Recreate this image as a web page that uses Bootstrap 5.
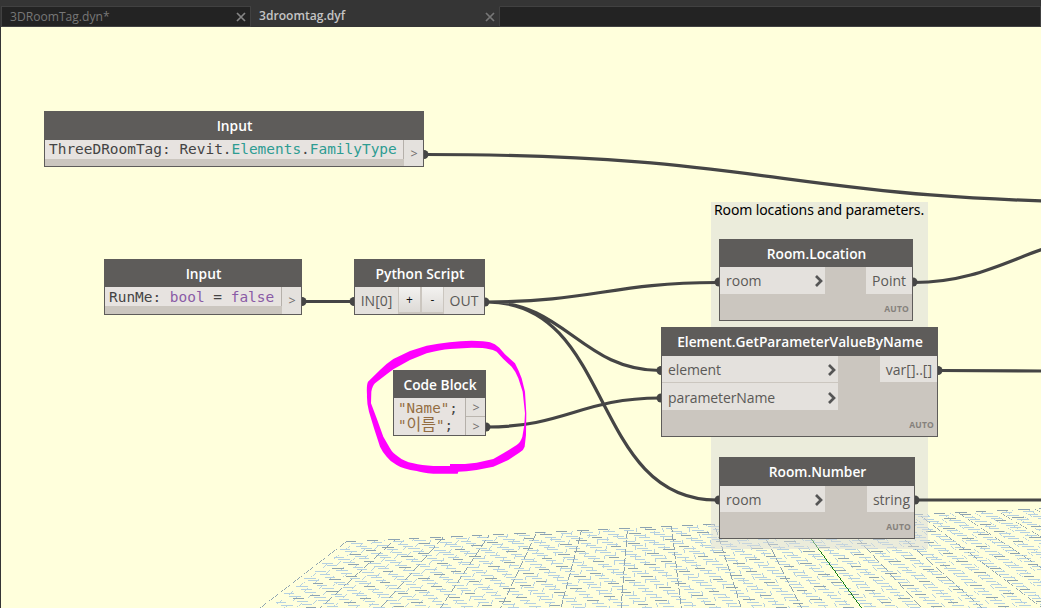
<!DOCTYPE html>
<html lang="en">
<head>
<meta charset="utf-8">
<title>3droomtag.dyf</title>
<link href="https://cdn.jsdelivr.net/npm/bootstrap@5.3.0/dist/css/bootstrap.min.css" rel="stylesheet">
<style>
body{width:1041px;height:608px;overflow:hidden;background:#ffffdc;font-family:"Open Sans",sans-serif;font-size:14px;line-height:1;color:#5b5957}
.tabstrip{height:27px;padding:6px 0 0 1px;background:#353535}
.doc-tab{width:250px;height:21px;padding:0 4px 0 8px;border:1px solid #414141;background:#232323;color:#777;font-size:12.1px}
.doc-tab:not(.current) span{padding-top:2px}
.doc-tab.current{width:249px;background:#353535;border-color:#353535 #414141 #353535 #353535;color:#c4c4c4;font-weight:600;padding-left:7px}
.tab-rest{background:#232323;border:1px solid #414141;border-left:0}
.workspace{height:581px;border-left:1px solid #353535}
.layer{left:0;top:0;width:1041px;height:608px;pointer-events:none}
.group{left:711px;top:202px;width:217px;height:347px;background:rgba(215,217,218,.5);color:#000;font-family:"Noto Sans",sans-serif;font-size:14px;letter-spacing:-.13px;padding:0 0 0 3px;line-height:15px}
.node{border:1px solid #5e5c5a;background:#cbc6bf}
.title{background:#5e5c5a;color:#fff;font-weight:600;font-size:13.75px;flex:none;height:27px;padding:1px 0 0 1px}
.title.tall{height:28px;padding-bottom:1px}
.port{background:#e4e1dd;height:27px;padding-top:1px}
.in{width:105px;padding:1px 2px 0 6px}
.out{padding:1px 3px 0 6px}
.auto{font-size:8.5px;font-weight:700;color:#85817c;letter-spacing:.2px;padding:0 3px 7px 0}
.code{font-family:"DejaVu Sans Mono","Noto Sans CJK KR",monospace;font-size:14.45px;color:#444;background:#e7e3e0;height:19px;padding-left:4px;line-height:18px;white-space:pre;border-right:1px solid #b5b0aa}
.n2 .code{line-height:20px}
.arrow{width:19px;background:#e4e1dd;font-size:12.5px;color:#6e6c6a;padding:2px 0 0 1px}
.teal{color:#2e9c92}.violet{color:#8a5ba6}.brown{color:#936d42}
.hangul{font-size:16px;line-height:1}
.step-btn{width:21px;height:25px;background:linear-gradient(#f3f2f0,#dddad6);color:#111;font-size:12px}
.n1{left:44px;top:111px;width:380px;height:56px}
.n2{left:104px;top:259px;width:198px;height:56px}
.n3{left:354px;top:259px;width:131px;height:56px}
.n4{left:393px;top:370px;width:93px;height:66px}
.n5{left:719px;top:239px;width:194px;height:82px}
.n6{left:661px;top:327px;width:277px;height:110px}
.n7{left:719px;top:457px;width:196px;height:82px}
.n6 .in{width:176px;padding-left:6px}
.n6 .port{padding-top:2px}
.n6 .in{letter-spacing:-.1px}
.n4 .code{height:auto;font-size:14.2px;line-height:17px;padding-top:2px}
.n4 .arrow+.arrow{border-top:1px solid #bbb6af}
</style>
<script src="https://cdn.jsdelivr.net/npm/bootstrap@5.3.0/dist/js/bootstrap.bundle.min.js"></script>
</head>
<body>
<nav class="tabstrip d-flex">
  <div class="doc-tab d-flex align-items-center justify-content-between"><span>3DRoomTag.dyn*</span><svg width="10" height="10" viewBox="0 0 10 10"><path d="M1 1l8 8M9 1L1 9" stroke="#858585" stroke-width="1.7"/></svg></div>
  <div class="doc-tab current d-flex align-items-center justify-content-between"><span>3droomtag.dyf</span><svg width="10" height="10" viewBox="0 0 10 10"><path d="M1 1l8 8M9 1L1 9" stroke="#777" stroke-width="1.7"/></svg></div>
  <div class="tab-rest flex-grow-1"></div>
</nav>
<main class="workspace"></main>

<svg class="layer position-absolute" id="grid" shape-rendering="crispEdges" fill="none"></svg>
<section class="group position-absolute text-nowrap">Room locations and parameters.</section>

<svg class="layer position-absolute" fill="none" stroke="#454545" stroke-width="3.2">
  <path d="M425 154.5C787 154.5 780 202.500 1150 202.500M303 301.5H354M487 302C591 302 613 282.500 717 282.500M487 302C565 302 582 370.500 660 370.500M487 302C615 302 589 500 717 500M487 427C565 427 582 398 660 398M914 282.500C970 282.500 1005 262 1043 249M939 370.500L1041 371M916 500H1041"/>
  <g fill="#454545" stroke="none">
    <circle cx="424" cy="154.500" r="4.500"/><circle cx="302" cy="301.500" r="4.500"/><circle cx="354" cy="301.500" r="4.500"/><circle cx="485" cy="302" r="4.500"/><circle cx="486" cy="427" r="4.500"/>
    <circle cx="719" cy="282" r="4.500"/><circle cx="661" cy="370.500" r="4.500"/><circle cx="661" cy="398" r="4.500"/><circle cx="719" cy="500" r="4.500"/><circle cx="913" cy="282" r="4.500"/><circle cx="938" cy="370.500" r="4.500"/><circle cx="915" cy="500" r="4.500"/>
  </g>
</svg>

<article class="node n1 position-absolute d-flex flex-column">
  <div class="title tall d-flex align-items-center justify-content-center">Input</div>
  <div class="d-flex flex-grow-1"><div class="code flex-grow-1">ThreeDRoomTag: Revit.<span class="teal">Elements</span>.<span class="teal">FamilyType</span></div><div class="arrow d-flex align-items-center justify-content-center">&gt;</div></div>
</article>
<article class="node n2 position-absolute d-flex flex-column">
  <div class="title d-flex align-items-center justify-content-center">Input</div>
  <div class="d-flex flex-grow-1"><div class="code flex-grow-1">RunMe: <span class="violet">bool</span> = <span class="violet">false</span></div><div class="arrow d-flex align-items-center justify-content-center">&gt;</div></div>
</article>
<article class="node n3 position-absolute d-flex flex-column">
  <div class="title d-flex align-items-center justify-content-center">Python Script</div>
  <div class="d-flex flex-grow-1"><div class="port d-flex align-items-center justify-content-center" style="width:43px">IN[0]</div><div class="d-flex flex-grow-1 justify-content-center"><span class="step-btn d-flex align-items-center justify-content-center" style="margin-right:2px">+</span><span class="step-btn d-flex align-items-center justify-content-center">-</span></div><div class="port d-flex align-items-center justify-content-center" style="width:40px">OUT</div></div>
</article>
<article class="node n4 position-absolute d-flex flex-column">
  <div class="title d-flex align-items-center justify-content-center">Code Block</div>
  <div class="d-flex flex-grow-1"><div class="code flex-grow-1"><div><span class="brown">"Name"</span>;</div><div><span class="brown">"<span class="hangul">이름</span>"</span>;</div></div><div class="d-flex flex-column"><div class="arrow flex-fill d-flex align-items-center justify-content-center">&gt;</div><div class="arrow flex-fill d-flex align-items-center justify-content-center">&gt;</div></div></div>
</article>
<article class="node n5 position-absolute d-flex flex-column">
  <div class="title d-flex align-items-center justify-content-center">Room.Location</div>
  <div class="d-flex justify-content-between"><div class="port in d-flex align-items-center justify-content-between">room<svg width="8" height="12" viewBox="0 0 8 12"><path d="M1 1l5 5-5 5" fill="none" stroke="#555" stroke-width="2.700"/></svg></div><div class="port out d-flex align-items-center" style="padding-right:6px">Point</div></div>
  <div class="auto mt-auto text-end">AUTO</div>
</article>
<article class="node n6 position-absolute d-flex flex-column">
  <div class="title tall d-flex align-items-center justify-content-center">Element.GetParameterValueByName</div>
  <div class="d-flex justify-content-between"><div><div class="port in d-flex align-items-center justify-content-between" style="height:26px;margin-bottom:1px">element<svg width="8" height="12" viewBox="0 0 8 12"><path d="M1 1l5 5-5 5" fill="none" stroke="#555" stroke-width="2.700"/></svg></div><div class="port in d-flex align-items-center justify-content-between">parameterName<svg width="8" height="12" viewBox="0 0 8 12"><path d="M1 1l5 5-5 5" fill="none" stroke="#555" stroke-width="2.700"/></svg></div></div><div class="port out d-flex align-items-center" style="height:26px;padding-right:5px">var[]..[]</div></div>
  <div class="auto mt-auto text-end">AUTO</div>
</article>
<article class="node n7 position-absolute d-flex flex-column">
  <div class="title tall d-flex align-items-center justify-content-center">Room.Number</div>
  <div class="d-flex justify-content-between"><div class="port in d-flex align-items-center justify-content-between" style="height:26px">room<svg width="8" height="12" viewBox="0 0 8 12"><path d="M1 1l5 5-5 5" fill="none" stroke="#555" stroke-width="2.700"/></svg></div><div class="port out d-flex align-items-center" style="height:26px;padding-right:4px">string</div></div>
  <div class="auto mt-auto text-end">AUTO</div>
</article>

<svg class="layer position-absolute"><path transform="translate(360 335) scale(.3333)" fill="#f0f" fill-rule="evenodd" d="M24 140L60 105Q80 85 100 72L150 48 200 32Q270 18 335 17Q375 17 390 22Q405 26 418 38L435 58 465 85Q478 110 485 130L495 170 499 235 498 300 494 335Q490 347 480 352L445 375 400 395 350 405 320 409 295 410 293 416H220Q185 413 170 408Q130 402 110 390Q92 381 80 365Q68 352 60 335L42 280 27 230Q20 205 21 180Q19 150 24 140ZM34 170Q37 153 45 145L80 118 100 103 150 75 200 55Q240 44 270 42L335 38Q375 38 385 42Q400 44 410 50L430 72 455 95Q468 110 475 130L488 170 495 235 493 270 487 305Q482 322 470 330L430 355 400 372 350 383 315 387H270V393H220Q185 391 160 385Q130 378 115 365Q98 355 90 340L70 305 50 250 33 205Z"/></svg>

<script>
// Background ground plane: perspective grid drawn as broken one-pixel strokes
const top0=[346,395,443,489,536,581,627,671,714,757,797,838,878,918,957,996,1034,1072,1110,1147,1184,1221];
const at=i=>{const a=Math.floor(i),f=i-a;return top0[a]+(top0[a+1]-top0[a])*f};
const paths={minor:'',major:'',axis:''};
for(let k=0,y0=541;k<45;k++){
  const left=346-(y0-541)*1.31;
  let n=k;
  for(let x=left+((k*8.3)%21);x<1041;x+=21,n++){
    const key=k===0||n%5===0?'major':'minor';
    const y=Math.round(y0-(x-346)*.0475);
    if(y<608) paths[key]+=`M${Math.round(x)} ${y}.5h${10+(n*7+k)%3}`;
  }
  y0+=2.5+k*.026;
}
for(let j=0;j<=100;j++){
  const u=j/5,tx=at(u),ty=541-(tx-346)*.0475,bx=259+u*60.25;
  const key=j===50?'axis':j%5?'minor':'major';
  for(let y=Math.ceil(ty);y<608;y++){
    const x=Math.round(tx+(bx-tx)*(y-ty)/(608-ty));
    const phase=(y+j*3)%9;
    if(x<1041&&(key==='axis'||(key==='major'?phase<7:phase<4))) paths[key]+=`M${x} ${y}.5h1`;
  }
}
document.getElementById('grid').innerHTML=
 `<path d="${paths.minor}" stroke="#b4d0e2"/><path d="${paths.major}" stroke="#8da3b1"/><path d="${paths.axis}" stroke="#168018"/>`;
</script>
</body>
</html>
